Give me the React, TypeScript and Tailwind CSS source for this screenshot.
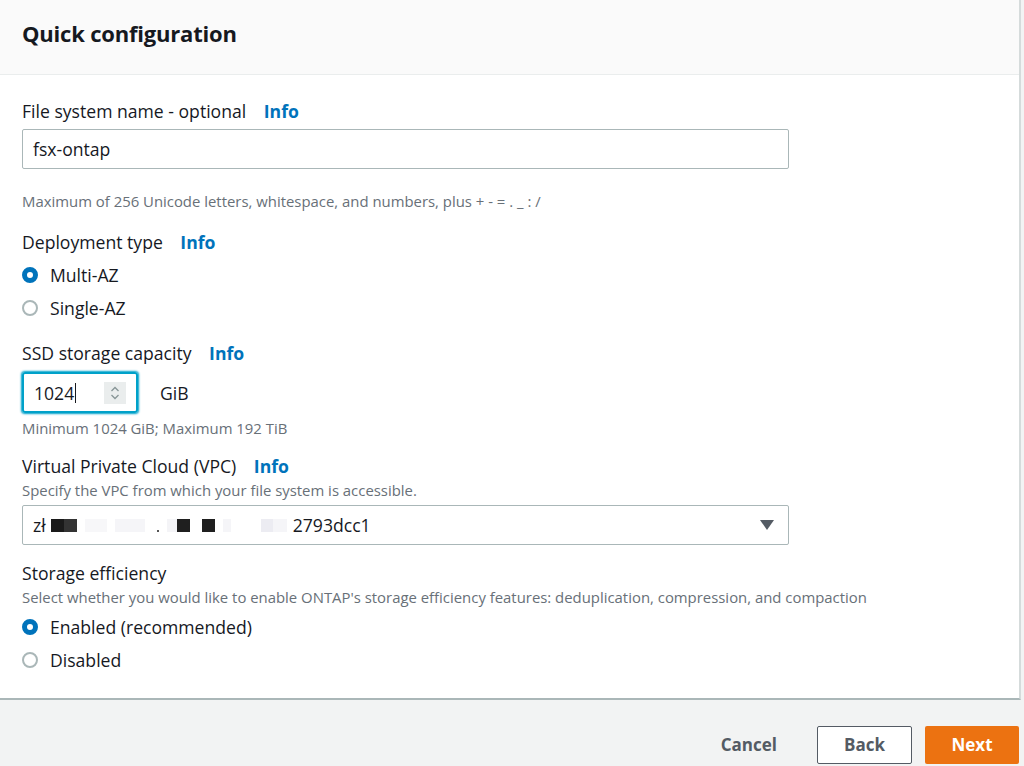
const font = { fontFamily: '"Open Sans", "Noto Sans", Arial, sans-serif' };

function Info() {
  return <span className="ml-[13px] font-bold text-[#0073bb]">Info</span>;
}

function Radio({ checked, label }: { checked?: boolean; label: string }) {
  return (
    <div className="flex h-6 items-center">
      {checked ? (
        <span className="box-border h-4 w-4 rounded-full border-[5px] border-[#0073bb] bg-white" />
      ) : (
        <span className="box-border h-4 w-4 rounded-full border-2 border-[#aab7b8] bg-white" />
      )}
      <span className="ml-3 text-[#16191f]">{label}</span>
    </div>
  );
}

export default function App() {
  return (
    <div className="h-[766px] w-[1024px] overflow-hidden bg-[#f2f3f3] text-[#16191f]" style={font}>
      <div className="h-[700px] w-[1021px] border-r-2 border-b-2 border-r-[#d5dbdb] border-b-[#aab7b8] bg-white">
        <div className="flex h-[75px] items-center border-b border-[#eaeded] bg-[#fafafa] px-[22px] pb-2">
          <h2 className="text-[22px] font-bold tracking-[-0.2px]">Quick configuration</h2>
        </div>

        <div className="px-[22px] text-[17.6px] leading-6">
          <div className="mt-[24px]">
            File system name - optional <Info />
          </div>
          <div className="mt-[6px] flex h-10 w-[767px] items-center rounded-[2px] border border-[#aab7b8] px-[10px]">
            fsx-ontap
          </div>
          <p className="mt-[22px] text-[14.9px] leading-5 text-[#687078]">
            Maximum of 256 Unicode letters, whitespace, and numbers, plus + - = . _ : /
          </p>

          <div className="mt-[19px]">
            Deployment type <Info />
          </div>
          <div className="mt-[9px] flex flex-col gap-[9px]">
            <Radio checked label="Multi-AZ" />
            <Radio label="Single-AZ" />
          </div>

          <div className="mt-[21px]">
            SSD storage capacity <Info />
          </div>
          <div className="mt-[7px] flex items-center">
            <div className="flex h-[41px] w-[116px] items-center rounded-[3px] border-2 border-[#00a1c9] pl-[10px] pr-[10px] shadow-[0_0_2px_1px_#00a1c9]">
              <span>1024</span>
              <span className="ml-[1px] h-[20px] w-px bg-[#16191f]" />
              <span className="ml-auto flex h-[22px] w-[22px] items-center justify-center bg-[#eaeded]">
                <svg width="12" height="16" viewBox="0 0 12 16" fill="none" stroke="#879596" strokeWidth="1.3">
                  <path d="M2.5 6 6 2.5 9.5 6" />
                  <path d="M2.5 10 6 13.5 9.5 10" />
                </svg>
              </span>
            </div>
            <span className="ml-[22px]">GiB</span>
          </div>
          <p className="mt-[5px] text-[14.9px] leading-5 text-[#687078]">Minimum 1024 GiB; Maximum 192 TiB</p>

          <div className="mt-[16px]">
            Virtual Private Cloud (VPC) <Info />
          </div>
          <p className="mt-[2px] text-[14.9px] leading-5 text-[#687078]">
            Specify the VPC from which your file system is accessible.
          </p>
          <div className="mt-[5px] flex h-10 w-[767px] items-center rounded-[2px] border border-[#aab7b8] pl-[10px] pr-[14px]">
            <span>zł</span>
            <span className="ml-[5px] h-[13px] w-[13px] bg-[#1a1a1a]" />
            <span className="h-[13px] w-[13px] bg-[#333]" />
            <span className="ml-[8px] h-[13px] w-[22px] bg-[#f7f7f9]" />
            <span className="ml-[8px] h-[13px] w-[30px] bg-[#f5f5f8]" />
            <span className="ml-[12px] mt-[12px] h-[2px] w-[2px] bg-[#555]" />
            <span className="ml-[8px] h-[13px] w-[10px] bg-[#f4f4f7]" />
            <span className="h-[13px] w-[13px] bg-[#1f1f1f]" />
            <span className="ml-[12px] h-[13px] w-[13px] bg-[#1f1f1f]" />
            <span className="ml-[8px] h-[13px] w-[8px] bg-[#f5f5f8]" />
            <span className="ml-[30px] h-[13px] w-[12px] bg-[#ececf2]" />
            <span className="h-[13px] w-[14px] bg-[#f5f5f8]" />
            <span className="ml-[6px]">2793dcc1</span>
            <svg className="ml-auto" width="14" height="10" viewBox="0 0 14 10">
              <path d="M0 0h14L7 10z" fill="#545b64" />
            </svg>
          </div>

          <div className="mt-[16px]">Storage efficiency</div>
          <p className="mt-[2px] text-[14.9px] leading-5 text-[#687078]">
            Select whether you would like to enable ONTAP's storage efficiency features: deduplication, compression, and compaction
          </p>
          <div className="mt-[8px] flex flex-col gap-[9px]">
            <Radio checked label="Enabled (recommended)" />
            <Radio label="Disabled" />
          </div>
        </div>
      </div>

      <div className="mt-[26px] flex items-center justify-end pr-[5px] text-[17px] font-bold">
        <button className="mr-[40px] text-[#545b64]">Cancel</button>
        <button className="mr-[13px] flex h-[38px] w-[95px] items-center justify-center rounded-[2px] border border-[#545b64] bg-white text-[#545b64]">
          Back
        </button>
        <button className="flex h-[38px] w-[94px] items-center justify-center rounded-[2px] bg-[#ec7211] text-white">
          Next
        </button>
      </div>
    </div>
  );
}
